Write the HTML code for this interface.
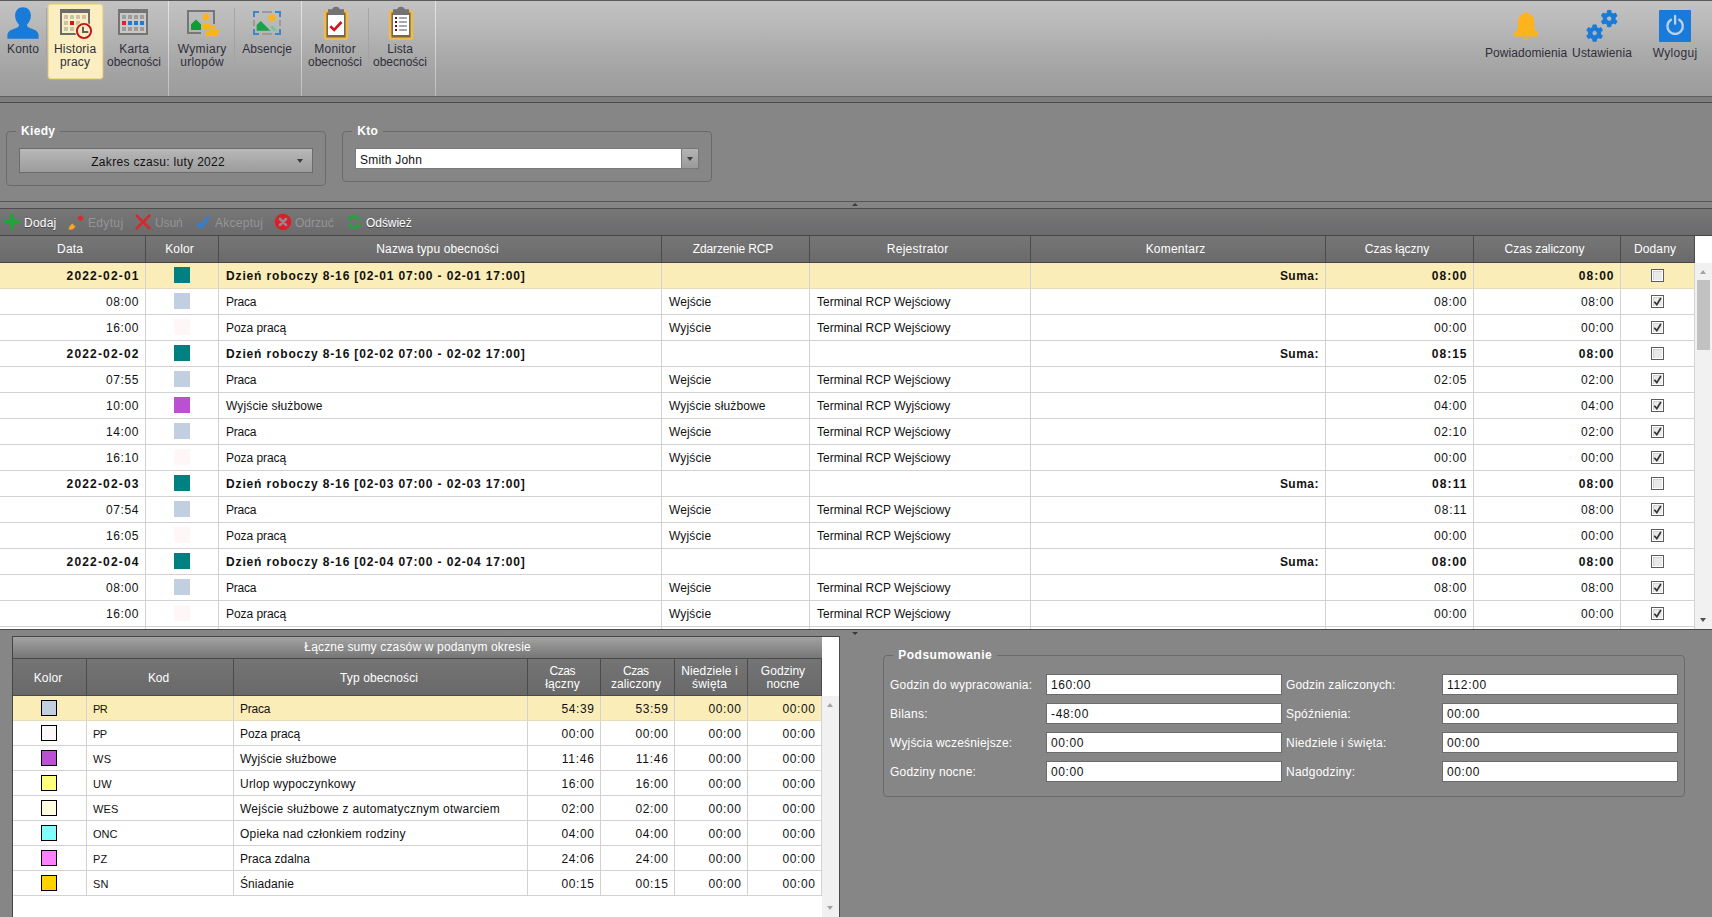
<!DOCTYPE html>
<html lang="pl"><head><meta charset="utf-8"><title>Historia pracy</title>
<style>
html,body{margin:0;padding:0;}
body{width:1712px;height:917px;overflow:hidden;background:#868686;font-family:"Liberation Sans",sans-serif;font-size:12px;color:#222;position:relative;}
.b{font-weight:bold;}
.abs{position:absolute;}
span{white-space:nowrap;}
/* top toolbar */
#tb{position:absolute;left:0;top:0;width:1712px;height:96px;background:linear-gradient(#c2c2c2 0%,#b9b9b9 25%,#adadad 50%,#a3a3a3 75%,#9c9c9c 100%);border-top:1px solid #5a5a5a;box-sizing:border-box;}
#tbline1{position:absolute;left:0;top:96px;width:1712px;height:1px;background:#5e5e5e;}
#tbband{position:absolute;left:0;top:97px;width:1712px;height:5px;background:#7f7f7f;}
#tbline2{position:absolute;left:0;top:102px;width:1712px;height:1px;background:#4c4c4c;}
.tbtn{position:absolute;top:4px;height:74px;text-align:center;color:#333;line-height:13px;}
.tbtn .lbl{position:absolute;left:-20px;right:-20px;top:38px;text-align:center;}
.tbtn svg{position:absolute;top:3px;left:50%;margin-left:-16px;}
.tbtn.sel{background:#fbeec0;border:1px solid #f3dc96;border-radius:3px;box-sizing:border-box;box-shadow:0 0 2px #e9d08a;}
.gsep{position:absolute;top:1px;height:95px;width:1px;background:linear-gradient(#e4e4e4,#d2d2d2 60%,#bcbcbc);}
.tsep{position:absolute;top:8px;height:64px;width:1px;background:linear-gradient(#a6a6a6,#a2a2a2 70%,rgba(160,160,160,0));}
.tl{text-align:center;line-height:13px;color:#2e2e3a;}
.selbtn{background:#fbeec1;border:1px solid #f2d98e;border-radius:3px;box-sizing:border-box;box-shadow:0 0 2px #f0d68a;}
.fs{border:1px solid #6a6a6a;border-radius:4px;box-sizing:border-box;}
.leg{background:#868686;color:#fff;text-align:center;line-height:16px;height:14px;}
.dbtn{box-sizing:border-box;border:1px solid #6b6b6b;background:linear-gradient(#b8b8b8,#9c9c9c);}
.arr{width:0;height:0;border-left:3.5px solid transparent;border-right:3.5px solid transparent;border-top:4px solid #3c3c3c;}
.inp{box-sizing:border-box;border:1px solid #7a7a7a;background:#fff;}
.cbtn{box-sizing:border-box;border:1px solid #777;border-left:none;background:linear-gradient(#b4b4b4,#9a9a9a);}
.gtt{line-height:14px;}
.gtt.on{color:#fff;text-shadow:0 1px 0 #4a4a4a;}
.gtt.off{color:#959595;}
.ghead{background:linear-gradient(#767676,#6a6a6c);}
.gh{box-sizing:border-box;height:26px;line-height:27px;text-align:center;color:#fff;border-right:1px solid #4b4b4b;padding-right:5px;}
.grow{left:0;width:1695px;height:26px;box-sizing:border-box;border-bottom:1px solid #d2d2d2;background:#fff;color:#111;}
.grow.sel{background:#faedb8;border-bottom-color:#e6dcbc;}
.gc{top:0;height:25px;line-height:27px;box-sizing:border-box;border-right:1px solid #d2d2d2;padding:0 7px;overflow:hidden;}
.gc.r{text-align:right;padding-right:6.5px}.gc.c{text-align:center}.gc.l{text-align:left}
.ptitle{background:linear-gradient(#a3a3a3,#767676);color:#fff;text-align:center;line-height:20px;}
.bh{box-sizing:border-box;height:36px;line-height:13px;text-align:center;color:#fff;border-right:1px solid #4b4b4b;padding-right:3px;}
.brow{left:13px;width:809px;height:25px;box-sizing:border-box;border-bottom:1px solid #d2d2d2;background:#fff;color:#111;}
.brow.sel{background:#faedb8;border-bottom-color:#e6dcbc;}
.bc{top:0;height:24px;line-height:26.5px;box-sizing:border-box;border-right:1px solid #d2d2d2;padding:0 6px;overflow:hidden;}
.bc.r{text-align:right}.bc.c{text-align:center}.bc.l{text-align:left}
.pl{color:#fff;line-height:14px;}
.pin{box-sizing:border-box;height:21px;border:1px solid #6c6c6c;background:#fff;line-height:21px;padding-left:4px;color:#111;}

</style></head>
<body>
<div id="tb"></div><div id="tbline1"></div><div id="tbband"></div><div id="tbline2"></div>
<div class="abs selbtn" style="left:48px;top:4px;width:55px;height:75px"></div>
<div class="gsep" style="left:168px"></div>
<div class="gsep" style="left:301px"></div>
<div class="gsep" style="left:435px"></div>
<div class="tsep" style="left:46px"></div>
<div class="tsep" style="left:234px"></div>
<div class="tsep" style="left:368px"></div>
<svg class="abs" style="left:7px;top:7px" width="32" height="32" viewBox="0 0 32 32" ><path fill="#187bd9" d="M16 0.3c-4.6 0-7.9 3.4-7.9 8.3 0 3.6 1.6 6.9 3.9 8.9 0 1.9-0.8 2.9-3.4 3.8C4.300 22.800 0.4 24.200 0.4 28.500V31.800H31.600V28.500c0-4.300-3.900-5.700-8.200-7.200-2.600-0.900-3.400-1.900-3.400-3.800 2.300-2 3.900-5.300 3.900-8.900C23.900 3.700 20.600 0.300 16 0.300z"/></svg>
<div class="abs tl" style="left:23px;top:43px;width:120px;margin-left:-60px"><span style="letter-spacing:0.18px;margin-right:-0.18px">Konto</span></div>
<svg class="abs" style="left:60px;top:9px" width="34" height="32" viewBox="0 0 34 32" ><path fill="#6b6b6b" fill-rule="evenodd" d="M0 0H30V26H0z M2 4V24H28V4z"/><rect x="4" y="6" width="4" height="4" fill="#c9c4a9"/><rect x="10" y="6" width="4" height="4" fill="#c9c4a9"/><rect x="16" y="6" width="4" height="4" fill="#c9c4a9"/><rect x="22" y="6" width="4" height="4" fill="#c9c4a9"/><rect x="4" y="12" width="4" height="4" fill="#c9c4a9"/><rect x="10" y="12" width="4" height="4" fill="#d9141e"/><rect x="16" y="12" width="4" height="4" fill="#c9c4a9"/><rect x="4" y="18" width="4" height="4" fill="#c9c4a9"/><rect x="10" y="18" width="4" height="4" fill="#c9c4a9"/><circle cx="24" cy="22" r="9" fill="#fbeec0"/><circle cx="24" cy="22" r="7.1" fill="#fbeec0" stroke="#bf141c" stroke-width="1.9"/><path d="M23 17.8V23H28.300" fill="none" stroke="#5f5f5f" stroke-width="2"/></svg>
<div class="abs tl" style="left:75px;top:43px;width:120px;margin-left:-60px"><span style="letter-spacing:0.21px;margin-right:-0.21px">Historia</span><br><span style="letter-spacing:0.21px;margin-right:-0.21px">pracy</span></div>
<svg class="abs" style="left:118px;top:9px" width="30" height="26" viewBox="0 0 30 26" ><rect x="2" y="4" width="26" height="20" fill="#c8c8c8"/><path fill="#747474" fill-rule="evenodd" d="M0 0H30V26H0z M2 4V24H28V4z"/><rect x="4" y="6" width="4" height="4" fill="#9f9b9b"/><rect x="10" y="6" width="4" height="4" fill="#9f9b9b"/><rect x="16" y="6" width="4" height="4" fill="#9f9b9b"/><rect x="22" y="6" width="4" height="4" fill="#9f9b9b"/><rect x="4" y="12" width="4" height="4" fill="#df1f2a"/><rect x="10" y="12" width="4" height="4" fill="#177dd8"/><rect x="16" y="12" width="4" height="4" fill="#177dd8"/><rect x="22" y="12" width="4" height="4" fill="#177dd8"/><rect x="4" y="18" width="4" height="4" fill="#9f9b9b"/><rect x="10" y="18" width="4" height="4" fill="#9f9b9b"/><rect x="16" y="18" width="4" height="4" fill="#9f9b9b"/><rect x="22" y="18" width="4" height="4" fill="#9f9b9b"/></svg>
<div class="abs tl" style="left:134px;top:43px;width:120px;margin-left:-60px"><span style="letter-spacing:0.24px;margin-right:-0.24px">Karta</span><br><span style="letter-spacing:-0.01px;margin-right:0.01px">obecności</span></div>
<svg class="abs" style="left:187px;top:10px" width="34" height="28" viewBox="0 0 34 28" ><path d="M27 14V1H1V23H14" fill="none" stroke="#767676" stroke-width="2"/><path fill="#0d9f2e" d="M4 20V14.200L9 9.600 14 14.200V20z"/><circle cx="19" cy="7" r="3.400" fill="#fdb416"/><path fill="#fdb416" d="M15.300 14.800Q15.300 13.700 16.400 13.700H20.200Q22.200 13.700 24 14.900L28 16.100Q29.300 16.500 29.300 17.400V18.600H22.800L21.600 20H15.300z"/><path fill="#fdb416" d="M18.600 26.200V20.800H22.400L23.400 19.700H32.600L30.600 26.200z"/></svg>
<div class="abs tl" style="left:202px;top:43px;width:120px;margin-left:-60px"><span style="letter-spacing:0.34px;margin-right:-0.34px">Wymiary</span><br><span style="letter-spacing:0.26px;margin-right:-0.26px">urlopów</span></div>
<svg class="abs" style="left:253px;top:11px" width="28" height="24" viewBox="0 0 28 24" ><path d="M6 1H1V6M22 1H27V6M1 18V23H6M27 18V23H22" fill="none" stroke="#3f86c6" stroke-width="2"/><path d="M9 1H19M9 23H19M1 9V15M27 9V15" fill="none" stroke="#9b9b9b" stroke-width="2"/><path fill="#74c690" d="M17 15.800L19.300 14.200 24.600 19.600 21 19.800z"/><path fill="#1aa24a" d="M3.600 19.800V14L7.800 9.900 17.400 19.800z"/><circle cx="19" cy="6.800" r="3.500" fill="#fdb416"/></svg>
<div class="abs tl" style="left:267px;top:43px;width:120px;margin-left:-60px"><span style="letter-spacing:0.04px;margin-right:-0.04px">Absencje</span></div>
<svg class="abs" style="left:323px;top:6px" width="26" height="35" viewBox="0 0 26 35" ><rect x="2.100" y="5.300" width="21.800" height="27.400" rx="1.200" fill="#74694e" stroke="#f2ba45" stroke-width="2.600"/><rect x="5" y="9" width="16" height="20" fill="#ffffff"/><path fill="#737373" d="M5 9V3.200H9.300C9.800 1.600 11.300 0.800 13 0.800S16.200 1.600 16.700 3.200H21V9z"/><path d="M7.300 20.200L11.200 24 18.500 16" fill="none" stroke="#d3151c" stroke-width="2.600"/></svg>
<div class="abs tl" style="left:335px;top:43px;width:120px;margin-left:-60px"><span style="letter-spacing:0.23px;margin-right:-0.23px">Monitor</span><br><span style="letter-spacing:-0.01px;margin-right:0.01px">obecności</span></div>
<svg class="abs" style="left:388px;top:6px" width="26" height="35" viewBox="0 0 26 35" ><rect x="2.100" y="5.300" width="21.800" height="27.400" rx="1.200" fill="#74694e" stroke="#f2ba45" stroke-width="2.600"/><rect x="5" y="9" width="16" height="20" fill="#ffffff"/><path fill="#737373" d="M5 9V3.200H9.300C9.800 1.600 11.300 0.800 13 0.800S16.200 1.600 16.700 3.200H21V9z"/><rect x="7" y="11" width="2" height="2" fill="#6b0f12"/><rect x="11.100" y="11" width="7.800" height="2" fill="#a8a8a8"/><rect x="7" y="15" width="2" height="2" fill="#6b0f12"/><rect x="11.100" y="15" width="7.800" height="2" fill="#a8a8a8"/><rect x="7" y="19" width="2" height="2" fill="#6b0f12"/><rect x="11.100" y="19" width="7.800" height="2" fill="#a8a8a8"/><rect x="7" y="23" width="2" height="2" fill="#6b0f12"/><rect x="11.100" y="23" width="7.800" height="2" fill="#a8a8a8"/></svg>
<div class="abs tl" style="left:400px;top:43px;width:120px;margin-left:-60px"><span style="letter-spacing:0.09px;margin-right:-0.09px">Lista</span><br><span style="letter-spacing:-0.01px;margin-right:0.01px">obecności</span></div>
<svg class="abs" style="left:1514px;top:12px" width="25" height="29" viewBox="0 0 25 29" ><path fill="#fdb31c" d="M12.100 0C11.100 0 10.400 0.600 10.200 1.600C6.500 2.600 4 5.600 4 9.500V15C4 17.500 2.800 18.800 0.600 20.600C0.200 20.900 0 21.400 0 22V23.200C0 24 0.500 24.500 1.300 24.500H22.900C23.700 24.500 24.200 24 24.200 23.200V22C24.200 21.400 24 20.900 23.600 20.600C21.400 18.800 20.200 17.500 20.200 15V9.500C20.200 5.600 17.700 2.600 14 1.600C13.800 0.600 13.100 0 12.100 0z"/><rect x="9.900" y="25.800" width="4.200" height="2.200" rx="1" fill="#fdb31c"/></svg>
<div class="abs tl" style="left:1526px;top:47px;width:120px;margin-left:-60px"><span style="letter-spacing:0.07px;margin-right:-0.07px">Powiadomienia</span></div>
<svg class="abs" style="left:1584px;top:8px" width="36" height="36" viewBox="0 0 36 36" ><path fill="#187bd9" fill-rule="evenodd" stroke="#187bd9" stroke-width="1" stroke-linejoin="round" d="M8.96 16.96 L12.24 16.96 L12.49 19.30 L14.68 20.57 L16.83 19.61 L18.47 22.45 L16.57 23.83 L16.57 26.37 L18.47 27.75 L16.83 30.59 L14.68 29.63 L12.49 30.90 L12.24 33.24 L8.96 33.24 L8.71 30.90 L6.52 29.63 L4.37 30.59 L2.73 27.75 L4.63 26.37 L4.63 23.83 L2.73 22.45 L4.37 19.61 L6.52 20.57 L8.71 19.30z M7.90 25.10 a2.70 2.70 0 1 0 5.40 0 a2.70 2.70 0 1 0 -5.40 0z"/><path fill="#187bd9" fill-rule="evenodd" stroke="#187bd9" stroke-width="1" stroke-linejoin="round" d="M23.56 2.46 L26.84 2.46 L27.09 4.80 L29.28 6.07 L31.43 5.11 L33.07 7.95 L31.17 9.33 L31.17 11.87 L33.07 13.25 L31.43 16.09 L29.28 15.13 L27.09 16.40 L26.84 18.74 L23.56 18.74 L23.31 16.40 L21.12 15.13 L18.97 16.09 L17.33 13.25 L19.23 11.87 L19.23 9.33 L17.33 7.95 L18.97 5.11 L21.12 6.07 L23.31 4.80z M22.50 10.60 a2.70 2.70 0 1 0 5.40 0 a2.70 2.70 0 1 0 -5.40 0z"/></svg>
<div class="abs tl" style="left:1602px;top:47px;width:120px;margin-left:-60px"><span style="letter-spacing:0.12px;margin-right:-0.12px">Ustawienia</span></div>
<svg class="abs" style="left:1659px;top:10px" width="32" height="32" viewBox="0 0 32 32" ><rect width="32" height="32" rx="1" fill="#187bd9"/><path d="M12 9.700A7.700 7.700 0 1 0 20.200 9.700" fill="none" stroke="#bdd0e8" stroke-width="2.300" stroke-linecap="round"/><path d="M16.100 6V13.800" stroke="#bdd0e8" stroke-width="2.300" stroke-linecap="round"/></svg>
<div class="abs tl" style="left:1675px;top:47px;width:120px;margin-left:-60px"><span style="letter-spacing:0.3px;margin-right:-0.3px">Wyloguj</span></div>
<div class="abs fs" style="left:6px;top:131px;width:320px;height:55px"></div><div class="abs leg" style="left:16px;top:123px;width:44px"><span class="b" style="letter-spacing:0.35px;margin-right:-0.35px">Kiedy</span></div>
<div class="abs dbtn" style="left:19px;top:148px;width:294px;height:25px"><div class="abs" style="left:0;right:16px;top:6px;text-align:center;color:#111"><span style="letter-spacing:0.31px;margin-right:-0.31px">Zakres czasu: luty 2022</span></div><div class="abs arr" style="left:277px;top:10px"></div></div>
<div class="abs fs" style="left:342px;top:131px;width:370px;height:51px"></div><div class="abs leg" style="left:352px;top:123px;width:31px"><span class="b" style="letter-spacing:0.35px;margin-right:-0.35px">Kto</span></div>
<div class="abs inp" style="left:355px;top:148px;width:327px;height:21px"><div class="abs" style="left:4px;top:4px;color:#111"><span style="letter-spacing:0.2px;margin-right:-0.2px">Smith John</span></div></div>
<div class="abs cbtn" style="left:682px;top:148px;width:17px;height:21px"><div class="abs arr" style="left:5px;top:8px"></div></div>
<div class="abs" style="left:0;top:201px;width:1712px;height:1px;background:#555"></div>
<div class="abs" style="left:0;top:202px;width:1712px;height:6px;background:#858585"></div>
<div class="abs" style="left:0;top:208px;width:1712px;height:1px;background:#4e4e4e"></div>
<div class="abs" style="left:852px;top:203px;width:0;height:0;border-left:3.5px solid transparent;border-right:3.5px solid transparent;border-bottom:3px solid #3a3a3a"></div>
<div class="abs" style="left:0;top:209px;width:1712px;height:26px;background:linear-gradient(#777777,#6b6b6d)"></div>
<div class="abs" style="left:0;top:235px;width:1712px;height:1px;background:#474747"></div>
<svg class="abs" style="left:4px;top:214px" width="16" height="16" viewBox="0 0 16 16" ><path d="M8 0V15.400M0 7.700H16" stroke="#21a338" stroke-width="3.600" fill="none"/></svg>
<div class="abs gtt on" style="left:24px;top:216px"><span style="letter-spacing:0.21px;margin-right:-0.21px">Dodaj</span></div>
<svg class="abs" style="left:67px;top:214px" width="18" height="18" viewBox="0 0 18 18" ><path fill="#e0262c" d="M10.200 4.300L13.600 1.200 16.800 4.200 13.400 7.300z"/><path fill="#f6a823" d="M5.200 9.600L8.600 12.800 5.400 15.600 1.600 15.800 2.400 12.400z"/></svg>
<div class="abs gtt off" style="left:88px;top:216px"><span style="letter-spacing:0.34px;margin-right:-0.34px">Edytuj</span></div>
<svg class="abs" style="left:135px;top:214px" width="17" height="16" viewBox="0 0 17 16" ><path d="M1 1L15.200 15M15.200 1L1 15" stroke="#d42a2c" stroke-width="2.500" fill="none"/></svg>
<div class="abs gtt off" style="left:155px;top:216px"><span style="letter-spacing:-0.08px;margin-right:0.08px">Usuń</span></div>
<svg class="abs" style="left:195px;top:214px" width="17" height="16" viewBox="0 0 17 16" ><path d="M2.200 9L6 13 13.800 3" stroke="#2f80d8" stroke-width="3" fill="none"/></svg>
<div class="abs gtt off" style="left:215px;top:216px"><span style="letter-spacing:0.28px;margin-right:-0.28px">Akceptuj</span></div>
<svg class="abs" style="left:274px;top:213px" width="18" height="18" viewBox="0 0 18 18" ><circle cx="9" cy="9" r="8.300" fill="#d8202a"/><path d="M6 6L12 12M12 6L6 12" stroke="#8d8d8d" stroke-width="2.600" stroke-linecap="round"/></svg>
<div class="abs gtt off" style="left:295px;top:216px"><span style="letter-spacing:-0.0px;margin-right:0.0px">Odrzuć</span></div>
<svg class="abs" style="left:347px;top:215px" width="15" height="14" viewBox="0 0 15 14" ><path d="M12.300 5.200A5.300 5.300 0 0 0 2.600 4" fill="none" stroke="#1da63a" stroke-width="2.400"/><path fill="#1da63a" d="M0.300 2.200L5.600 2.600 2.400 6.600z"/><path d="M2.200 8.800A5.300 5.300 0 0 0 11.900 10" fill="none" stroke="#1da63a" stroke-width="2.400"/><path fill="#1da63a" d="M14.200 11.800L8.900 11.400 12.100 7.400z"/></svg>
<div class="abs gtt on" style="left:366px;top:216px"><span style="letter-spacing:-0.06px;margin-right:0.06px">Odśwież</span></div>
<div class="abs" style="left:0;top:236px;width:1712px;height:394px;background:#fff"></div>
<div class="abs ghead" style="left:0;top:236px;width:1695px;height:26px"></div>
<div class="abs gh" style="left:0px;top:236px;width:146px"><span style="letter-spacing:0.17px;margin-right:-0.17px">Data</span></div>
<div class="abs gh" style="left:146px;top:236px;width:73px"><span style="letter-spacing:0.13px;margin-right:-0.13px">Kolor</span></div>
<div class="abs gh" style="left:219px;top:236px;width:443px"><span style="letter-spacing:0.12px;margin-right:-0.12px">Nazwa typu obecności</span></div>
<div class="abs gh" style="left:662px;top:236px;width:148px"><span style="letter-spacing:-0.13px;margin-right:0.13px">Zdarzenie RCP</span></div>
<div class="abs gh" style="left:810px;top:236px;width:221px"><span style="letter-spacing:0.27px;margin-right:-0.27px">Rejestrator</span></div>
<div class="abs gh" style="left:1031px;top:236px;width:295px"><span style="letter-spacing:0.21px;margin-right:-0.21px">Komentarz</span></div>
<div class="abs gh" style="left:1326px;top:236px;width:148px"><span style="letter-spacing:-0.04px;margin-right:0.04px">Czas łączny</span></div>
<div class="abs gh" style="left:1474px;top:236px;width:147px"><span style="letter-spacing:-0.02px;margin-right:0.02px">Czas zaliczony</span></div>
<div class="abs gh" style="left:1621px;top:236px;width:74px"><span style="letter-spacing:0.12px;margin-right:-0.12px">Dodany</span></div>
<div class="abs" style="left:0;top:262px;width:1695px;height:1px;background:#4d463a"></div>
<div class="abs grow sel" style="top:263px"><div class="abs gc r" style="left:0px;width:146px"><span class="b" style="letter-spacing:1.17px;margin-right:-1.17px">2022-02-01</span></div><div class="abs gc c" style="left:146px;width:73px"></div><div class="abs gc l" style="left:219px;width:443px"><span class="b" style="letter-spacing:0.86px;margin-right:-0.86px">Dzień roboczy 8-16 [02-01 07:00 - 02-01 17:00]</span></div><div class="abs gc l" style="left:662px;width:148px"></div><div class="abs gc l" style="left:810px;width:221px"></div><div class="abs gc r" style="left:1031px;width:295px"><span class="b" style="letter-spacing:0.48px;margin-right:-0.48px">Suma:</span></div><div class="abs gc r" style="left:1326px;width:148px"><span class="b" style="letter-spacing:1.0px;margin-right:-1.0px">08:00</span></div><div class="abs gc r" style="left:1474px;width:147px"><span class="b" style="letter-spacing:1.0px;margin-right:-1.0px">08:00</span></div><div class="abs gc c" style="left:1621px;width:74px"></div><div class="abs" style="left:174px;top:4px;width:16px;height:16px;background:#008080"></div><svg class="abs" style="left:1651px;top:6px" width="13" height="13" viewBox="0 0 13 13"><rect x="0.500" y="0.500" width="12" height="12" fill="#ffffff" stroke="#5c5c5c"/><rect x="2.500" y="2.500" width="8" height="8" fill="#e9e9e9" stroke="#d3d3d3"/><path d="M3 10.500H10.500V3" fill="none" stroke="#ececec"/></svg></div>
<div class="abs grow" style="top:289px"><div class="abs gc r" style="left:0px;width:146px"><span style="letter-spacing:0.59px;margin-right:-0.59px">08:00</span></div><div class="abs gc c" style="left:146px;width:73px"></div><div class="abs gc l" style="left:219px;width:443px"><span style="letter-spacing:-0.21px;margin-right:0.21px">Praca</span></div><div class="abs gc l" style="left:662px;width:148px"><span style="letter-spacing:0.07px;margin-right:-0.07px">Wejście</span></div><div class="abs gc l" style="left:810px;width:221px"><span style="letter-spacing:-0.01px;margin-right:0.01px">Terminal RCP Wejściowy</span></div><div class="abs gc r" style="left:1031px;width:295px"></div><div class="abs gc r" style="left:1326px;width:148px"><span style="letter-spacing:0.59px;margin-right:-0.59px">08:00</span></div><div class="abs gc r" style="left:1474px;width:147px"><span style="letter-spacing:0.59px;margin-right:-0.59px">08:00</span></div><div class="abs gc c" style="left:1621px;width:74px"></div><div class="abs" style="left:174px;top:4px;width:16px;height:16px;background:#c1cfe0"></div><svg class="abs" style="left:1651px;top:6px" width="13" height="13" viewBox="0 0 13 13"><rect x="0.500" y="0.500" width="12" height="12" fill="#ffffff" stroke="#5c5c5c"/><rect x="2.500" y="2.500" width="8" height="8" fill="#e9e9e9" stroke="#d3d3d3"/><path d="M3 10.500H10.500V3" fill="none" stroke="#ececec"/><path d="M3.300 6.800L5.800 9.600 9.900 3" fill="none" stroke="#333333" stroke-width="1.700"/></svg></div>
<div class="abs grow" style="top:315px"><div class="abs gc r" style="left:0px;width:146px"><span style="letter-spacing:0.59px;margin-right:-0.59px">16:00</span></div><div class="abs gc c" style="left:146px;width:73px"></div><div class="abs gc l" style="left:219px;width:443px"><span style="letter-spacing:-0.06px;margin-right:0.06px">Poza pracą</span></div><div class="abs gc l" style="left:662px;width:148px"><span style="letter-spacing:0.14px;margin-right:-0.14px">Wyjście</span></div><div class="abs gc l" style="left:810px;width:221px"><span style="letter-spacing:-0.01px;margin-right:0.01px">Terminal RCP Wejściowy</span></div><div class="abs gc r" style="left:1031px;width:295px"></div><div class="abs gc r" style="left:1326px;width:148px"><span style="letter-spacing:0.59px;margin-right:-0.59px">00:00</span></div><div class="abs gc r" style="left:1474px;width:147px"><span style="letter-spacing:0.59px;margin-right:-0.59px">00:00</span></div><div class="abs gc c" style="left:1621px;width:74px"></div><div class="abs" style="left:174px;top:4px;width:16px;height:16px;background:#fff7f7"></div><svg class="abs" style="left:1651px;top:6px" width="13" height="13" viewBox="0 0 13 13"><rect x="0.500" y="0.500" width="12" height="12" fill="#ffffff" stroke="#5c5c5c"/><rect x="2.500" y="2.500" width="8" height="8" fill="#e9e9e9" stroke="#d3d3d3"/><path d="M3 10.500H10.500V3" fill="none" stroke="#ececec"/><path d="M3.300 6.800L5.800 9.600 9.900 3" fill="none" stroke="#333333" stroke-width="1.700"/></svg></div>
<div class="abs grow" style="top:341px"><div class="abs gc r" style="left:0px;width:146px"><span class="b" style="letter-spacing:1.17px;margin-right:-1.17px">2022-02-02</span></div><div class="abs gc c" style="left:146px;width:73px"></div><div class="abs gc l" style="left:219px;width:443px"><span class="b" style="letter-spacing:0.86px;margin-right:-0.86px">Dzień roboczy 8-16 [02-02 07:00 - 02-02 17:00]</span></div><div class="abs gc l" style="left:662px;width:148px"></div><div class="abs gc l" style="left:810px;width:221px"></div><div class="abs gc r" style="left:1031px;width:295px"><span class="b" style="letter-spacing:0.48px;margin-right:-0.48px">Suma:</span></div><div class="abs gc r" style="left:1326px;width:148px"><span class="b" style="letter-spacing:1.0px;margin-right:-1.0px">08:15</span></div><div class="abs gc r" style="left:1474px;width:147px"><span class="b" style="letter-spacing:1.0px;margin-right:-1.0px">08:00</span></div><div class="abs gc c" style="left:1621px;width:74px"></div><div class="abs" style="left:174px;top:4px;width:16px;height:16px;background:#008080"></div><svg class="abs" style="left:1651px;top:6px" width="13" height="13" viewBox="0 0 13 13"><rect x="0.500" y="0.500" width="12" height="12" fill="#ffffff" stroke="#5c5c5c"/><rect x="2.500" y="2.500" width="8" height="8" fill="#e9e9e9" stroke="#d3d3d3"/><path d="M3 10.500H10.500V3" fill="none" stroke="#ececec"/></svg></div>
<div class="abs grow" style="top:367px"><div class="abs gc r" style="left:0px;width:146px"><span style="letter-spacing:0.59px;margin-right:-0.59px">07:55</span></div><div class="abs gc c" style="left:146px;width:73px"></div><div class="abs gc l" style="left:219px;width:443px"><span style="letter-spacing:-0.21px;margin-right:0.21px">Praca</span></div><div class="abs gc l" style="left:662px;width:148px"><span style="letter-spacing:0.07px;margin-right:-0.07px">Wejście</span></div><div class="abs gc l" style="left:810px;width:221px"><span style="letter-spacing:-0.01px;margin-right:0.01px">Terminal RCP Wejściowy</span></div><div class="abs gc r" style="left:1031px;width:295px"></div><div class="abs gc r" style="left:1326px;width:148px"><span style="letter-spacing:0.59px;margin-right:-0.59px">02:05</span></div><div class="abs gc r" style="left:1474px;width:147px"><span style="letter-spacing:0.59px;margin-right:-0.59px">02:00</span></div><div class="abs gc c" style="left:1621px;width:74px"></div><div class="abs" style="left:174px;top:4px;width:16px;height:16px;background:#c1cfe0"></div><svg class="abs" style="left:1651px;top:6px" width="13" height="13" viewBox="0 0 13 13"><rect x="0.500" y="0.500" width="12" height="12" fill="#ffffff" stroke="#5c5c5c"/><rect x="2.500" y="2.500" width="8" height="8" fill="#e9e9e9" stroke="#d3d3d3"/><path d="M3 10.500H10.500V3" fill="none" stroke="#ececec"/><path d="M3.300 6.800L5.800 9.600 9.900 3" fill="none" stroke="#333333" stroke-width="1.700"/></svg></div>
<div class="abs grow" style="top:393px"><div class="abs gc r" style="left:0px;width:146px"><span style="letter-spacing:0.59px;margin-right:-0.59px">10:00</span></div><div class="abs gc c" style="left:146px;width:73px"></div><div class="abs gc l" style="left:219px;width:443px"><span style="letter-spacing:0.13px;margin-right:-0.13px">Wyjście służbowe</span></div><div class="abs gc l" style="left:662px;width:148px"><span style="letter-spacing:0.13px;margin-right:-0.13px">Wyjście służbowe</span></div><div class="abs gc l" style="left:810px;width:221px"><span style="letter-spacing:0.01px;margin-right:-0.01px">Terminal RCP Wyjściowy</span></div><div class="abs gc r" style="left:1031px;width:295px"></div><div class="abs gc r" style="left:1326px;width:148px"><span style="letter-spacing:0.59px;margin-right:-0.59px">04:00</span></div><div class="abs gc r" style="left:1474px;width:147px"><span style="letter-spacing:0.59px;margin-right:-0.59px">04:00</span></div><div class="abs gc c" style="left:1621px;width:74px"></div><div class="abs" style="left:174px;top:4px;width:16px;height:16px;background:#ba50d2"></div><svg class="abs" style="left:1651px;top:6px" width="13" height="13" viewBox="0 0 13 13"><rect x="0.500" y="0.500" width="12" height="12" fill="#ffffff" stroke="#5c5c5c"/><rect x="2.500" y="2.500" width="8" height="8" fill="#e9e9e9" stroke="#d3d3d3"/><path d="M3 10.500H10.500V3" fill="none" stroke="#ececec"/><path d="M3.300 6.800L5.800 9.600 9.900 3" fill="none" stroke="#333333" stroke-width="1.700"/></svg></div>
<div class="abs grow" style="top:419px"><div class="abs gc r" style="left:0px;width:146px"><span style="letter-spacing:0.59px;margin-right:-0.59px">14:00</span></div><div class="abs gc c" style="left:146px;width:73px"></div><div class="abs gc l" style="left:219px;width:443px"><span style="letter-spacing:-0.21px;margin-right:0.21px">Praca</span></div><div class="abs gc l" style="left:662px;width:148px"><span style="letter-spacing:0.07px;margin-right:-0.07px">Wejście</span></div><div class="abs gc l" style="left:810px;width:221px"><span style="letter-spacing:-0.01px;margin-right:0.01px">Terminal RCP Wejściowy</span></div><div class="abs gc r" style="left:1031px;width:295px"></div><div class="abs gc r" style="left:1326px;width:148px"><span style="letter-spacing:0.59px;margin-right:-0.59px">02:10</span></div><div class="abs gc r" style="left:1474px;width:147px"><span style="letter-spacing:0.59px;margin-right:-0.59px">02:00</span></div><div class="abs gc c" style="left:1621px;width:74px"></div><div class="abs" style="left:174px;top:4px;width:16px;height:16px;background:#c1cfe0"></div><svg class="abs" style="left:1651px;top:6px" width="13" height="13" viewBox="0 0 13 13"><rect x="0.500" y="0.500" width="12" height="12" fill="#ffffff" stroke="#5c5c5c"/><rect x="2.500" y="2.500" width="8" height="8" fill="#e9e9e9" stroke="#d3d3d3"/><path d="M3 10.500H10.500V3" fill="none" stroke="#ececec"/><path d="M3.300 6.800L5.800 9.600 9.900 3" fill="none" stroke="#333333" stroke-width="1.700"/></svg></div>
<div class="abs grow" style="top:445px"><div class="abs gc r" style="left:0px;width:146px"><span style="letter-spacing:0.59px;margin-right:-0.59px">16:10</span></div><div class="abs gc c" style="left:146px;width:73px"></div><div class="abs gc l" style="left:219px;width:443px"><span style="letter-spacing:-0.06px;margin-right:0.06px">Poza pracą</span></div><div class="abs gc l" style="left:662px;width:148px"><span style="letter-spacing:0.14px;margin-right:-0.14px">Wyjście</span></div><div class="abs gc l" style="left:810px;width:221px"><span style="letter-spacing:-0.01px;margin-right:0.01px">Terminal RCP Wejściowy</span></div><div class="abs gc r" style="left:1031px;width:295px"></div><div class="abs gc r" style="left:1326px;width:148px"><span style="letter-spacing:0.59px;margin-right:-0.59px">00:00</span></div><div class="abs gc r" style="left:1474px;width:147px"><span style="letter-spacing:0.59px;margin-right:-0.59px">00:00</span></div><div class="abs gc c" style="left:1621px;width:74px"></div><div class="abs" style="left:174px;top:4px;width:16px;height:16px;background:#fff7f7"></div><svg class="abs" style="left:1651px;top:6px" width="13" height="13" viewBox="0 0 13 13"><rect x="0.500" y="0.500" width="12" height="12" fill="#ffffff" stroke="#5c5c5c"/><rect x="2.500" y="2.500" width="8" height="8" fill="#e9e9e9" stroke="#d3d3d3"/><path d="M3 10.500H10.500V3" fill="none" stroke="#ececec"/><path d="M3.300 6.800L5.800 9.600 9.900 3" fill="none" stroke="#333333" stroke-width="1.700"/></svg></div>
<div class="abs grow" style="top:471px"><div class="abs gc r" style="left:0px;width:146px"><span class="b" style="letter-spacing:1.17px;margin-right:-1.17px">2022-02-03</span></div><div class="abs gc c" style="left:146px;width:73px"></div><div class="abs gc l" style="left:219px;width:443px"><span class="b" style="letter-spacing:0.86px;margin-right:-0.86px">Dzień roboczy 8-16 [02-03 07:00 - 02-03 17:00]</span></div><div class="abs gc l" style="left:662px;width:148px"></div><div class="abs gc l" style="left:810px;width:221px"></div><div class="abs gc r" style="left:1031px;width:295px"><span class="b" style="letter-spacing:0.48px;margin-right:-0.48px">Suma:</span></div><div class="abs gc r" style="left:1326px;width:148px"><span class="b" style="letter-spacing:1.14px;margin-right:-1.14px">08:11</span></div><div class="abs gc r" style="left:1474px;width:147px"><span class="b" style="letter-spacing:1.0px;margin-right:-1.0px">08:00</span></div><div class="abs gc c" style="left:1621px;width:74px"></div><div class="abs" style="left:174px;top:4px;width:16px;height:16px;background:#008080"></div><svg class="abs" style="left:1651px;top:6px" width="13" height="13" viewBox="0 0 13 13"><rect x="0.500" y="0.500" width="12" height="12" fill="#ffffff" stroke="#5c5c5c"/><rect x="2.500" y="2.500" width="8" height="8" fill="#e9e9e9" stroke="#d3d3d3"/><path d="M3 10.500H10.500V3" fill="none" stroke="#ececec"/></svg></div>
<div class="abs grow" style="top:497px"><div class="abs gc r" style="left:0px;width:146px"><span style="letter-spacing:0.59px;margin-right:-0.59px">07:54</span></div><div class="abs gc c" style="left:146px;width:73px"></div><div class="abs gc l" style="left:219px;width:443px"><span style="letter-spacing:-0.21px;margin-right:0.21px">Praca</span></div><div class="abs gc l" style="left:662px;width:148px"><span style="letter-spacing:0.07px;margin-right:-0.07px">Wejście</span></div><div class="abs gc l" style="left:810px;width:221px"><span style="letter-spacing:-0.01px;margin-right:0.01px">Terminal RCP Wejściowy</span></div><div class="abs gc r" style="left:1031px;width:295px"></div><div class="abs gc r" style="left:1326px;width:148px"><span style="letter-spacing:0.77px;margin-right:-0.77px">08:11</span></div><div class="abs gc r" style="left:1474px;width:147px"><span style="letter-spacing:0.59px;margin-right:-0.59px">08:00</span></div><div class="abs gc c" style="left:1621px;width:74px"></div><div class="abs" style="left:174px;top:4px;width:16px;height:16px;background:#c1cfe0"></div><svg class="abs" style="left:1651px;top:6px" width="13" height="13" viewBox="0 0 13 13"><rect x="0.500" y="0.500" width="12" height="12" fill="#ffffff" stroke="#5c5c5c"/><rect x="2.500" y="2.500" width="8" height="8" fill="#e9e9e9" stroke="#d3d3d3"/><path d="M3 10.500H10.500V3" fill="none" stroke="#ececec"/><path d="M3.300 6.800L5.800 9.600 9.900 3" fill="none" stroke="#333333" stroke-width="1.700"/></svg></div>
<div class="abs grow" style="top:523px"><div class="abs gc r" style="left:0px;width:146px"><span style="letter-spacing:0.59px;margin-right:-0.59px">16:05</span></div><div class="abs gc c" style="left:146px;width:73px"></div><div class="abs gc l" style="left:219px;width:443px"><span style="letter-spacing:-0.06px;margin-right:0.06px">Poza pracą</span></div><div class="abs gc l" style="left:662px;width:148px"><span style="letter-spacing:0.14px;margin-right:-0.14px">Wyjście</span></div><div class="abs gc l" style="left:810px;width:221px"><span style="letter-spacing:-0.01px;margin-right:0.01px">Terminal RCP Wejściowy</span></div><div class="abs gc r" style="left:1031px;width:295px"></div><div class="abs gc r" style="left:1326px;width:148px"><span style="letter-spacing:0.59px;margin-right:-0.59px">00:00</span></div><div class="abs gc r" style="left:1474px;width:147px"><span style="letter-spacing:0.59px;margin-right:-0.59px">00:00</span></div><div class="abs gc c" style="left:1621px;width:74px"></div><div class="abs" style="left:174px;top:4px;width:16px;height:16px;background:#fff7f7"></div><svg class="abs" style="left:1651px;top:6px" width="13" height="13" viewBox="0 0 13 13"><rect x="0.500" y="0.500" width="12" height="12" fill="#ffffff" stroke="#5c5c5c"/><rect x="2.500" y="2.500" width="8" height="8" fill="#e9e9e9" stroke="#d3d3d3"/><path d="M3 10.500H10.500V3" fill="none" stroke="#ececec"/><path d="M3.300 6.800L5.800 9.600 9.900 3" fill="none" stroke="#333333" stroke-width="1.700"/></svg></div>
<div class="abs grow" style="top:549px"><div class="abs gc r" style="left:0px;width:146px"><span class="b" style="letter-spacing:1.17px;margin-right:-1.17px">2022-02-04</span></div><div class="abs gc c" style="left:146px;width:73px"></div><div class="abs gc l" style="left:219px;width:443px"><span class="b" style="letter-spacing:0.86px;margin-right:-0.86px">Dzień roboczy 8-16 [02-04 07:00 - 02-04 17:00]</span></div><div class="abs gc l" style="left:662px;width:148px"></div><div class="abs gc l" style="left:810px;width:221px"></div><div class="abs gc r" style="left:1031px;width:295px"><span class="b" style="letter-spacing:0.48px;margin-right:-0.48px">Suma:</span></div><div class="abs gc r" style="left:1326px;width:148px"><span class="b" style="letter-spacing:1.0px;margin-right:-1.0px">08:00</span></div><div class="abs gc r" style="left:1474px;width:147px"><span class="b" style="letter-spacing:1.0px;margin-right:-1.0px">08:00</span></div><div class="abs gc c" style="left:1621px;width:74px"></div><div class="abs" style="left:174px;top:4px;width:16px;height:16px;background:#008080"></div><svg class="abs" style="left:1651px;top:6px" width="13" height="13" viewBox="0 0 13 13"><rect x="0.500" y="0.500" width="12" height="12" fill="#ffffff" stroke="#5c5c5c"/><rect x="2.500" y="2.500" width="8" height="8" fill="#e9e9e9" stroke="#d3d3d3"/><path d="M3 10.500H10.500V3" fill="none" stroke="#ececec"/></svg></div>
<div class="abs grow" style="top:575px"><div class="abs gc r" style="left:0px;width:146px"><span style="letter-spacing:0.59px;margin-right:-0.59px">08:00</span></div><div class="abs gc c" style="left:146px;width:73px"></div><div class="abs gc l" style="left:219px;width:443px"><span style="letter-spacing:-0.21px;margin-right:0.21px">Praca</span></div><div class="abs gc l" style="left:662px;width:148px"><span style="letter-spacing:0.07px;margin-right:-0.07px">Wejście</span></div><div class="abs gc l" style="left:810px;width:221px"><span style="letter-spacing:-0.01px;margin-right:0.01px">Terminal RCP Wejściowy</span></div><div class="abs gc r" style="left:1031px;width:295px"></div><div class="abs gc r" style="left:1326px;width:148px"><span style="letter-spacing:0.59px;margin-right:-0.59px">08:00</span></div><div class="abs gc r" style="left:1474px;width:147px"><span style="letter-spacing:0.59px;margin-right:-0.59px">08:00</span></div><div class="abs gc c" style="left:1621px;width:74px"></div><div class="abs" style="left:174px;top:4px;width:16px;height:16px;background:#c1cfe0"></div><svg class="abs" style="left:1651px;top:6px" width="13" height="13" viewBox="0 0 13 13"><rect x="0.500" y="0.500" width="12" height="12" fill="#ffffff" stroke="#5c5c5c"/><rect x="2.500" y="2.500" width="8" height="8" fill="#e9e9e9" stroke="#d3d3d3"/><path d="M3 10.500H10.500V3" fill="none" stroke="#ececec"/><path d="M3.300 6.800L5.800 9.600 9.900 3" fill="none" stroke="#333333" stroke-width="1.700"/></svg></div>
<div class="abs grow" style="top:601px"><div class="abs gc r" style="left:0px;width:146px"><span style="letter-spacing:0.59px;margin-right:-0.59px">16:00</span></div><div class="abs gc c" style="left:146px;width:73px"></div><div class="abs gc l" style="left:219px;width:443px"><span style="letter-spacing:-0.06px;margin-right:0.06px">Poza pracą</span></div><div class="abs gc l" style="left:662px;width:148px"><span style="letter-spacing:0.14px;margin-right:-0.14px">Wyjście</span></div><div class="abs gc l" style="left:810px;width:221px"><span style="letter-spacing:-0.01px;margin-right:0.01px">Terminal RCP Wejściowy</span></div><div class="abs gc r" style="left:1031px;width:295px"></div><div class="abs gc r" style="left:1326px;width:148px"><span style="letter-spacing:0.59px;margin-right:-0.59px">00:00</span></div><div class="abs gc r" style="left:1474px;width:147px"><span style="letter-spacing:0.59px;margin-right:-0.59px">00:00</span></div><div class="abs gc c" style="left:1621px;width:74px"></div><div class="abs" style="left:174px;top:4px;width:16px;height:16px;background:#fff7f7"></div><svg class="abs" style="left:1651px;top:6px" width="13" height="13" viewBox="0 0 13 13"><rect x="0.500" y="0.500" width="12" height="12" fill="#ffffff" stroke="#5c5c5c"/><rect x="2.500" y="2.500" width="8" height="8" fill="#e9e9e9" stroke="#d3d3d3"/><path d="M3 10.500H10.500V3" fill="none" stroke="#ececec"/><path d="M3.300 6.800L5.800 9.600 9.900 3" fill="none" stroke="#333333" stroke-width="1.700"/></svg></div>
<div class="abs" style="left:145px;top:627px;width:1px;height:2px;background:#d2d2d2"></div>
<div class="abs" style="left:218px;top:627px;width:1px;height:2px;background:#d2d2d2"></div>
<div class="abs" style="left:661px;top:627px;width:1px;height:2px;background:#d2d2d2"></div>
<div class="abs" style="left:809px;top:627px;width:1px;height:2px;background:#d2d2d2"></div>
<div class="abs" style="left:1030px;top:627px;width:1px;height:2px;background:#d2d2d2"></div>
<div class="abs" style="left:1325px;top:627px;width:1px;height:2px;background:#d2d2d2"></div>
<div class="abs" style="left:1473px;top:627px;width:1px;height:2px;background:#d2d2d2"></div>
<div class="abs" style="left:1620px;top:627px;width:1px;height:2px;background:#d2d2d2"></div>
<div class="abs" style="left:1694px;top:627px;width:1px;height:2px;background:#d2d2d2"></div>
<div class="abs" style="left:0;top:629px;width:1712px;height:1px;background:#4a4a4a"></div>
<div class="abs" style="left:1695px;top:263px;width:17px;height:366px;background:#f1f1f1"></div>
<div class="abs" style="left:1697px;top:280px;width:13px;height:70px;background:#c1c1c1"></div>
<div class="abs" style="left:1700px;top:270px;width:0;height:0;border-left:3.5px solid transparent;border-right:3.5px solid transparent;border-bottom:4px solid #a3a3a3"></div>
<div class="abs" style="left:1700px;top:618px;width:0;height:0;border-left:3.5px solid transparent;border-right:3.5px solid transparent;border-top:4px solid #505050"></div>
<div class="abs" style="left:12px;top:636px;width:828px;height:300px;background:#fff;border-left:1px solid #464646;border-top:1px solid #464646;box-sizing:border-box"></div>
<div class="abs" style="left:839px;top:636px;width:1px;height:300px;background:#4a4a4a"></div>
<div class="abs ptitle" style="left:13px;top:637px;width:809px;height:21px"><span style="letter-spacing:0.16px;margin-right:-0.16px">Łączne sumy czasów w podanym okresie</span></div>
<div class="abs" style="left:13px;top:658px;width:809px;height:1px;background:#4a4a4a"></div>
<div class="abs" style="left:13px;top:659px;width:809px;height:36px;background:linear-gradient(#747474,#696969)"></div>
<div class="abs bh" style="left:13px;top:659px;width:74px;padding-top:13px"><span style="letter-spacing:0.13px;margin-right:-0.13px">Kolor</span></div>
<div class="abs bh" style="left:87px;top:659px;width:147px;padding-top:13px"><span style="letter-spacing:-0.07px;margin-right:0.07px">Kod</span></div>
<div class="abs bh" style="left:234px;top:659px;width:294px;padding-top:13px"><span style="letter-spacing:0.09px;margin-right:-0.09px">Typ obecności</span></div>
<div class="abs bh" style="left:528px;top:659px;width:73px;padding-top:6px"><span style="letter-spacing:-0.39px;margin-right:0.39px">Czas</span><br><span style="letter-spacing:0.1px;margin-right:-0.1px">łączny</span></div>
<div class="abs bh" style="left:601px;top:659px;width:74px;padding-top:6px"><span style="letter-spacing:-0.39px;margin-right:0.39px">Czas</span><br><span style="letter-spacing:0.08px;margin-right:-0.08px">zaliczony</span></div>
<div class="abs bh" style="left:675px;top:659px;width:73px;padding-top:6px"><span style="letter-spacing:0.1px;margin-right:-0.1px">Niedziele i</span><br><span style="letter-spacing:0.2px;margin-right:-0.2px">święta</span></div>
<div class="abs bh" style="left:748px;top:659px;width:74px;padding-top:6px"><span style="letter-spacing:0.04px;margin-right:-0.04px">Godziny</span><br><span style="letter-spacing:0.04px;margin-right:-0.04px">nocne</span></div>
<div class="abs" style="left:13px;top:695px;width:809px;height:1px;background:#4a4a4a"></div>
<div class="abs brow sel" style="top:696px"><div class="abs bc c" style="left:0px;width:74px"></div><div class="abs bc l" style="left:74px;width:147px"><span style="font-size:11px;letter-spacing:-0.5px;margin-right:0.5px">PR</span></div><div class="abs bc l" style="left:221px;width:294px"><span style="letter-spacing:-0.21px;margin-right:0.21px">Praca</span></div><div class="abs bc r" style="left:515px;width:73px"><span style="letter-spacing:0.59px;margin-right:-0.59px">54:39</span></div><div class="abs bc r" style="left:588px;width:74px"><span style="letter-spacing:0.59px;margin-right:-0.59px">53:59</span></div><div class="abs bc r" style="left:662px;width:73px"><span style="letter-spacing:0.59px;margin-right:-0.59px">00:00</span></div><div class="abs bc r" style="left:735px;width:74px"><span style="letter-spacing:0.59px;margin-right:-0.59px">00:00</span></div><div class="abs" style="left:28px;top:4px;width:16px;height:16px;box-sizing:border-box;border:1px solid #000;background:#c1cfe0"></div></div>
<div class="abs brow" style="top:721px"><div class="abs bc c" style="left:0px;width:74px"></div><div class="abs bc l" style="left:74px;width:147px"><span style="font-size:11px;letter-spacing:-0.7px;margin-right:0.7px">PP</span></div><div class="abs bc l" style="left:221px;width:294px"><span style="letter-spacing:-0.06px;margin-right:0.06px">Poza pracą</span></div><div class="abs bc r" style="left:515px;width:73px"><span style="letter-spacing:0.59px;margin-right:-0.59px">00:00</span></div><div class="abs bc r" style="left:588px;width:74px"><span style="letter-spacing:0.59px;margin-right:-0.59px">00:00</span></div><div class="abs bc r" style="left:662px;width:73px"><span style="letter-spacing:0.59px;margin-right:-0.59px">00:00</span></div><div class="abs bc r" style="left:735px;width:74px"><span style="letter-spacing:0.59px;margin-right:-0.59px">00:00</span></div><div class="abs" style="left:28px;top:4px;width:16px;height:16px;box-sizing:border-box;border:1px solid #000;background:#fdf9f9"></div></div>
<div class="abs brow" style="top:746px"><div class="abs bc c" style="left:0px;width:74px"></div><div class="abs bc l" style="left:74px;width:147px"><span style="font-size:11px;letter-spacing:0.34px;margin-right:-0.34px">WS</span></div><div class="abs bc l" style="left:221px;width:294px"><span style="letter-spacing:0.13px;margin-right:-0.13px">Wyjście służbowe</span></div><div class="abs bc r" style="left:515px;width:73px"><span style="letter-spacing:0.77px;margin-right:-0.77px">11:46</span></div><div class="abs bc r" style="left:588px;width:74px"><span style="letter-spacing:0.77px;margin-right:-0.77px">11:46</span></div><div class="abs bc r" style="left:662px;width:73px"><span style="letter-spacing:0.59px;margin-right:-0.59px">00:00</span></div><div class="abs bc r" style="left:735px;width:74px"><span style="letter-spacing:0.59px;margin-right:-0.59px">00:00</span></div><div class="abs" style="left:28px;top:4px;width:16px;height:16px;box-sizing:border-box;border:1px solid #000;background:#ba50d2"></div></div>
<div class="abs brow" style="top:771px"><div class="abs bc c" style="left:0px;width:74px"></div><div class="abs bc l" style="left:74px;width:147px"><span style="font-size:11px;letter-spacing:0.3px;margin-right:-0.3px">UW</span></div><div class="abs bc l" style="left:221px;width:294px"><span style="letter-spacing:0.21px;margin-right:-0.21px">Urlop wypoczynkowy</span></div><div class="abs bc r" style="left:515px;width:73px"><span style="letter-spacing:0.59px;margin-right:-0.59px">16:00</span></div><div class="abs bc r" style="left:588px;width:74px"><span style="letter-spacing:0.59px;margin-right:-0.59px">16:00</span></div><div class="abs bc r" style="left:662px;width:73px"><span style="letter-spacing:0.59px;margin-right:-0.59px">00:00</span></div><div class="abs bc r" style="left:735px;width:74px"><span style="letter-spacing:0.59px;margin-right:-0.59px">00:00</span></div><div class="abs" style="left:28px;top:4px;width:16px;height:16px;box-sizing:border-box;border:1px solid #000;background:#ffff80"></div></div>
<div class="abs brow" style="top:796px"><div class="abs bc c" style="left:0px;width:74px"></div><div class="abs bc l" style="left:74px;width:147px"><span style="font-size:11px;letter-spacing:0.1px;margin-right:-0.1px">WES</span></div><div class="abs bc l" style="left:221px;width:294px"><span style="letter-spacing:0.24px;margin-right:-0.24px">Wejście służbowe z automatycznym otwarciem</span></div><div class="abs bc r" style="left:515px;width:73px"><span style="letter-spacing:0.59px;margin-right:-0.59px">02:00</span></div><div class="abs bc r" style="left:588px;width:74px"><span style="letter-spacing:0.59px;margin-right:-0.59px">02:00</span></div><div class="abs bc r" style="left:662px;width:73px"><span style="letter-spacing:0.59px;margin-right:-0.59px">00:00</span></div><div class="abs bc r" style="left:735px;width:74px"><span style="letter-spacing:0.59px;margin-right:-0.59px">00:00</span></div><div class="abs" style="left:28px;top:4px;width:16px;height:16px;box-sizing:border-box;border:1px solid #000;background:#ffffe0"></div></div>
<div class="abs brow" style="top:821px"><div class="abs bc c" style="left:0px;width:74px"></div><div class="abs bc l" style="left:74px;width:147px"><span style="font-size:11px;letter-spacing:0.04px;margin-right:-0.04px">ONC</span></div><div class="abs bc l" style="left:221px;width:294px"><span style="letter-spacing:0.2px;margin-right:-0.2px">Opieka nad członkiem rodziny</span></div><div class="abs bc r" style="left:515px;width:73px"><span style="letter-spacing:0.59px;margin-right:-0.59px">04:00</span></div><div class="abs bc r" style="left:588px;width:74px"><span style="letter-spacing:0.59px;margin-right:-0.59px">04:00</span></div><div class="abs bc r" style="left:662px;width:73px"><span style="letter-spacing:0.59px;margin-right:-0.59px">00:00</span></div><div class="abs bc r" style="left:735px;width:74px"><span style="letter-spacing:0.59px;margin-right:-0.59px">00:00</span></div><div class="abs" style="left:28px;top:4px;width:16px;height:16px;box-sizing:border-box;border:1px solid #000;background:#80ffff"></div></div>
<div class="abs brow" style="top:846px"><div class="abs bc c" style="left:0px;width:74px"></div><div class="abs bc l" style="left:74px;width:147px"><span style="font-size:11px;letter-spacing:0.06px;margin-right:-0.06px">PZ</span></div><div class="abs bc l" style="left:221px;width:294px"><span style="letter-spacing:-0.01px;margin-right:0.01px">Praca zdalna</span></div><div class="abs bc r" style="left:515px;width:73px"><span style="letter-spacing:0.59px;margin-right:-0.59px">24:06</span></div><div class="abs bc r" style="left:588px;width:74px"><span style="letter-spacing:0.59px;margin-right:-0.59px">24:00</span></div><div class="abs bc r" style="left:662px;width:73px"><span style="letter-spacing:0.59px;margin-right:-0.59px">00:00</span></div><div class="abs bc r" style="left:735px;width:74px"><span style="letter-spacing:0.59px;margin-right:-0.59px">00:00</span></div><div class="abs" style="left:28px;top:4px;width:16px;height:16px;box-sizing:border-box;border:1px solid #000;background:#ff80ff"></div></div>
<div class="abs brow" style="top:871px"><div class="abs bc c" style="left:0px;width:74px"></div><div class="abs bc l" style="left:74px;width:147px"><span style="font-size:11px;letter-spacing:0.24px;margin-right:-0.24px">SN</span></div><div class="abs bc l" style="left:221px;width:294px"><span style="letter-spacing:0.08px;margin-right:-0.08px">Śniadanie</span></div><div class="abs bc r" style="left:515px;width:73px"><span style="letter-spacing:0.59px;margin-right:-0.59px">00:15</span></div><div class="abs bc r" style="left:588px;width:74px"><span style="letter-spacing:0.59px;margin-right:-0.59px">00:15</span></div><div class="abs bc r" style="left:662px;width:73px"><span style="letter-spacing:0.59px;margin-right:-0.59px">00:00</span></div><div class="abs bc r" style="left:735px;width:74px"><span style="letter-spacing:0.59px;margin-right:-0.59px">00:00</span></div><div class="abs" style="left:28px;top:4px;width:16px;height:16px;box-sizing:border-box;border:1px solid #000;background:#ffd200"></div></div>
<div class="abs" style="left:822px;top:696px;width:17px;height:230px;background:#f1f1f1"></div>
<div class="abs" style="left:827px;top:703px;width:0;height:0;border-left:3.5px solid transparent;border-right:3.5px solid transparent;border-bottom:4px solid #a3a3a3"></div>
<div class="abs" style="left:827px;top:906px;width:0;height:0;border-left:3.5px solid transparent;border-right:3.5px solid transparent;border-top:4px solid #a3a3a3"></div>
<div class="abs" style="left:852px;top:632px;width:0;height:0;border-left:3.5px solid transparent;border-right:3.5px solid transparent;border-top:3px solid #3a3a3a"></div>
<div class="abs fs" style="left:883px;top:655px;width:802px;height:142px"></div>
<div class="abs leg" style="left:893px;top:647px;width:104px"><span class="b" style="letter-spacing:0.49px;margin-right:-0.49px">Podsumowanie</span></div>
<div class="abs pl" style="left:890px;top:678px"><span style="letter-spacing:0.21px;margin-right:-0.21px">Godzin do wypracowania:</span></div>
<div class="abs pin" style="left:1046px;top:674px;width:236px"><span style="letter-spacing:0.54px;margin-right:-0.54px">160:00</span></div>
<div class="abs pl" style="left:1286px;top:678px"><span style="letter-spacing:0.14px;margin-right:-0.14px">Godzin zaliczonych:</span></div>
<div class="abs pin" style="left:1442px;top:674px;width:236px"><span style="letter-spacing:0.69px;margin-right:-0.69px">112:00</span></div>
<div class="abs pl" style="left:890px;top:707px"><span style="letter-spacing:0.26px;margin-right:-0.26px">Bilans:</span></div>
<div class="abs pin" style="left:1046px;top:703px;width:236px"><span style="letter-spacing:0.66px;margin-right:-0.66px">-48:00</span></div>
<div class="abs pl" style="left:1286px;top:707px"><span style="letter-spacing:0.2px;margin-right:-0.2px">Spóźnienia:</span></div>
<div class="abs pin" style="left:1442px;top:703px;width:236px"><span style="letter-spacing:0.59px;margin-right:-0.59px">00:00</span></div>
<div class="abs pl" style="left:890px;top:736px"><span style="letter-spacing:0.18px;margin-right:-0.18px">Wyjścia wcześniejsze:</span></div>
<div class="abs pin" style="left:1046px;top:732px;width:236px"><span style="letter-spacing:0.59px;margin-right:-0.59px">00:00</span></div>
<div class="abs pl" style="left:1286px;top:736px"><span style="letter-spacing:0.24px;margin-right:-0.24px">Niedziele i święta:</span></div>
<div class="abs pin" style="left:1442px;top:732px;width:236px"><span style="letter-spacing:0.59px;margin-right:-0.59px">00:00</span></div>
<div class="abs pl" style="left:890px;top:765px"><span style="letter-spacing:0.19px;margin-right:-0.19px">Godziny nocne:</span></div>
<div class="abs pin" style="left:1046px;top:761px;width:236px"><span style="letter-spacing:0.59px;margin-right:-0.59px">00:00</span></div>
<div class="abs pl" style="left:1286px;top:765px"><span style="letter-spacing:0.24px;margin-right:-0.24px">Nadgodziny:</span></div>
<div class="abs pin" style="left:1442px;top:761px;width:236px"><span style="letter-spacing:0.59px;margin-right:-0.59px">00:00</span></div>
</body></html>
